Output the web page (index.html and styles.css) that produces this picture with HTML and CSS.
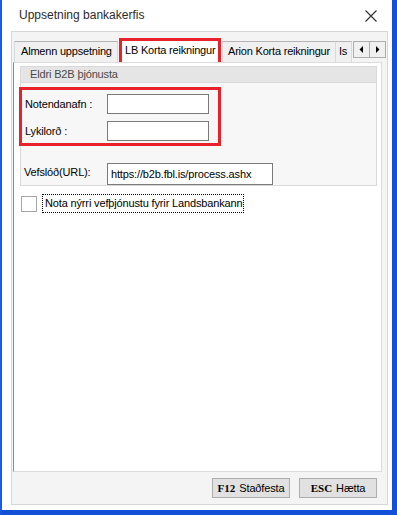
FILE: index.html
```html
<!DOCTYPE html>
<html>
<head>
<meta charset="utf-8">
<link rel="stylesheet" href="styles.css">
</head>
<body>
<div class="window">
  <div class="titlebar">
    <span class="title">Uppsetning bankakerfis</span>
    <svg class="close" width="12" height="12" viewBox="0 0 12 12"><path d="M0.5 0.5 L11.5 11.5 M11.5 0.5 L0.5 11.5" stroke="#333" stroke-width="1.2" fill="none"/></svg>
  </div>
  <div class="client">
    <div class="tabrow">
      <div class="tabs">
        <div class="tab t1">Almenn uppsetning</div>
        <div class="tab t2 active">LB Korta reikningur</div>
        <div class="tab t3">Arion Korta reikningur</div>
        <div class="tab t4">Is</div>
      </div>
      <div class="scroll">
        <div class="sbtn"><svg width="5" height="7" viewBox="0 0 5 7"><path d="M4 0 L4 7 L0.5 3.5 Z" fill="#000"/></svg></div>
        <div class="sbtn"><svg width="5" height="7" viewBox="0 0 5 7"><path d="M1 0 L1 7 L4.5 3.5 Z" fill="#000"/></svg></div>
      </div>
    </div>
    <div class="page">
      <div class="group">
        <div class="ghead">Eldri B2B þjónusta</div>
        <div class="gbody">
          <div class="creds">
            <div class="row"><span class="lbl">Notendanafn :</span><span class="inp"></span></div>
            <div class="row"><span class="lbl">Lykilorð :</span><span class="inp"></span></div>
          </div>
          <div class="row url"><span class="lbl">Vefslóð(URL):</span><span class="inp wide">https://b2b.fbl.is/process.ashx</span></div>
        </div>
      </div>
      <div class="check">
        <span class="box"></span>
        <span class="clabel">Nota nýrri vefþjónustu fyrir Landsbankann</span>
      </div>
    </div>
    <div class="bottom">
      <div class="btn"><b>F12</b> Staðfesta</div>
      <div class="btn"><b>ESC</b> Hætta</div>
    </div>
  </div>
</div>
</body>
</html>
```

FILE: styles.css
```css
html, body {
  margin: 0;
  padding: 0;
  background: #fff;
}
body {
  width: 397px;
  height: 515px;
  overflow: hidden;
  font-family: "Liberation Sans", Arial, sans-serif;
  font-size: 11px;
  letter-spacing: -0.15px;
  color: #000;
}
.window {
  box-sizing: border-box;
  width: 397px;
  height: 515px;
  background: #fff;
  border-left: 2px solid #1a5ce6;
  border-right: 5px solid #1250d8;
  border-bottom: 5px solid #1250d8;
  display: flex;
  flex-direction: column;
}
.titlebar {
  height: 31px;
  flex: none;
  display: flex;
  align-items: center;
  justify-content: space-between;
  padding: 0 15px 0 17px;
}
.title {
  font-size: 12px;
  letter-spacing: 0;
  color: #2b2b2b;
  margin-top: -1px;
}
.close {
  display: block;
}
.client {
  flex: 1;
  margin: 0 4px 5px 9px;
  border: 1px solid #d6d6d6;
  background: #f4f4f4;
  display: flex;
  flex-direction: column;
}
.tabrow {
  margin: 6px 1px 0 1px;
  height: 24px;
  display: flex;
  align-items: flex-end;
  position: relative;
  z-index: 2;
}
.tabs {
  flex: 1;
  display: flex;
  align-items: flex-end;
  overflow: hidden;
  height: 24px;
  padding-left: 1px;
}
.tab {
  flex: none;
  box-sizing: border-box;
  height: 21px;
  line-height: 19px;
  border: 1px solid #d9d9d9;
  border-top-color: #b4b4b4;
  border-bottom: none;
  background: #f0f0f0;
  padding-left: 6px;
  white-space: nowrap;
  letter-spacing: -0.2px;
}
.t1 { width: 104px; }
.t2 { width: 100px; margin-left: 2px; padding-left: 4px; }
.t3 { width: 114px; margin-left: 2px; padding-left: 5px; }
.t4 { width: 16px; padding-left: 3px; border-left: none; }
.tab.active {
  height: 24px;
  line-height: 22px;
  background: #fff;
  position: relative;
  border-color: #d9d9d9;
}
.tab.active::after {
  content: "";
  position: absolute;
  left: -2px;
  top: -1px;
  width: 102px;
  height: 28px;
  box-sizing: border-box;
  border: 3px solid #e8222a;
  z-index: 3;
}
.scroll {
  flex: none;
  display: flex;
  align-self: flex-start;
  margin-top: 3px;
}
.sbtn {
  box-sizing: border-box;
  width: 17px;
  height: 17px;
  border: 1px solid #adadad;
  background: #f0f0f0;
  display: flex;
  align-items: center;
  justify-content: center;
}
.sbtn + .sbtn { margin-left: -1px; }
.page {
  flex: 1;
  margin: 0 5px 0 1px;
  background: #fff;
  border: 1px solid #dcdcdc;
  border-left: 1px solid #8e8e8e;
  display: flex;
  flex-direction: column;
  padding: 3px 4px 0 6px;
}
.group {
  border: 1px solid #d9d9d9;
  background: #f7f7f7;
}
.ghead {
  height: 15px;
  line-height: 15px;
  background: #e5e5e5;
  color: #4a4a4a;
  padding-left: 9px;
  border-bottom: 1px solid #dadada;
}
.gbody {
  padding: 11px 0 0 3px;
}
.creds {
  position: relative;
  display: flex;
  flex-direction: column;
  gap: 7px;
}
.creds::after {
  content: "";
  position: absolute;
  left: -5px;
  top: -7px;
  width: 202px;
  height: 59px;
  box-sizing: border-box;
  border: 3px solid #e8222a;
}
.row {
  display: flex;
  align-items: center;
  height: 20px;
}
.lbl {
  width: 82px;
  flex: none;
  padding-left: 1px;
}
.inp {
  box-sizing: border-box;
  width: 102px;
  height: 20px;
  border: 1px solid #7a7a7a;
  background: #fff;
}
.url {
  margin-top: 22px;
  height: 22px;
}
.url .lbl { padding-left: 0; width: 83px; margin-top: -4px; }
.inp.wide {
  width: 166px;
  height: 22px;
  line-height: 20px;
  padding-left: 3px;
  color: #000;
}
.check {
  margin-top: 8px;
  margin-left: 1px;
  display: flex;
  align-items: center;
  height: 19px;
}
.box {
  box-sizing: border-box;
  width: 16px;
  height: 16px;
  border: 1px solid #a6a6a6;
  background: #fff;
}
.clabel {
  margin-left: 5px;
  border: 1px dotted #000;
  height: 17px;
  line-height: 17px;
  padding: 0 1px 0 2px;
}
.bottom {
  height: 32px;
  flex: none;
  display: flex;
  justify-content: flex-end;
  gap: 9px;
  padding: 6px 10px 0 0;
  box-sizing: border-box;
}
.btn {
  box-sizing: border-box;
  width: 78px;
  height: 20px;
  border: 1px solid #adadad;
  background: #e1e1e1;
  display: flex;
  align-items: center;
  justify-content: center;
  gap: 4px;
}
.btn b {
  font-family: "Liberation Serif", "Times New Roman", serif;
  font-size: 11px;
  font-weight: bold;
  letter-spacing: 0;
}
```
